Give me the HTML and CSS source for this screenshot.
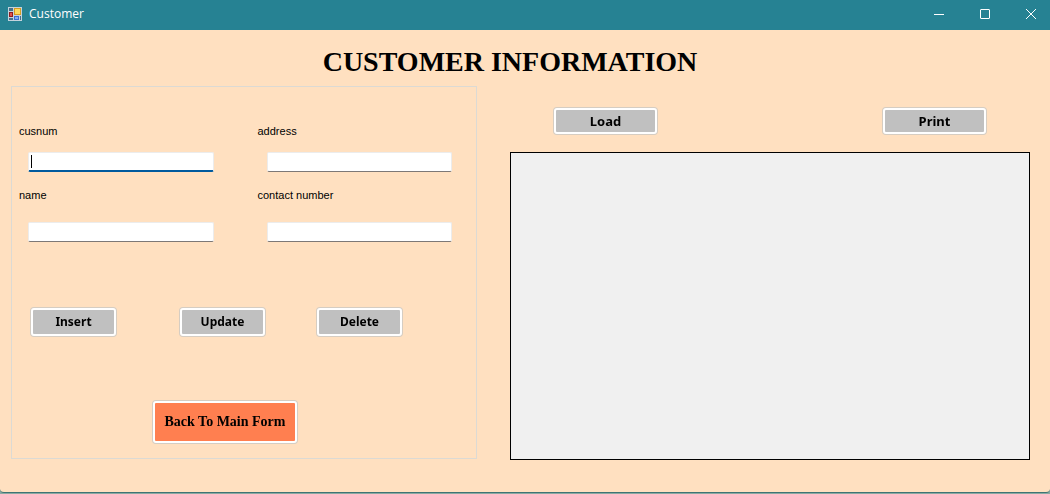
FILE: index.html
```html
<!DOCTYPE html>
<html lang="en">
<head>
<meta charset="utf-8">
<meta name="viewport" content="width=device-width, initial-scale=1">
<title>Customer</title>
<link rel="stylesheet" href="styles.css">
</head>
<body>
<div class="window">
  <header class="titlebar">
    <svg class="app-icon" viewBox="0 0 14 14" aria-hidden="true">
      <rect width="14" height="14" fill="#c3d3dc"/>
      <rect x="1" y="1" width="4" height="3" fill="#47708a"/>
      <rect x="6" y="1" width="7" height="7" fill="#d79a22"/>
      <rect x="7" y="2" width="5" height="5" fill="#fbd95c"/>
      <rect x="1" y="5" width="4" height="5" fill="#8f1d20"/>
      <rect x="2" y="6" width="2" height="3" fill="#e0524a"/>
      <rect x="1" y="11" width="4" height="2" fill="#47708a"/>
      <rect x="6" y="9" width="5" height="4" fill="#3b6fd0"/>
      <rect x="7" y="10" width="3" height="2" fill="#82aef2"/>
      <rect x="12" y="9" width="1" height="4" fill="#47708a"/>
    </svg>
    <span class="titlebar-text">Customer</span>
    <div class="window-controls">
      <button class="window-button" type="button" aria-label="Minimize">
        <svg class="control-icon" viewBox="0 0 10 10"><path d="M0 5.5H10"/></svg>
      </button>
      <button class="window-button" type="button" aria-label="Maximize">
        <svg class="control-icon" viewBox="0 0 10 10"><rect x=".5" y=".5" width="9" height="9" rx=".5"/></svg>
      </button>
      <button class="window-button" type="button" aria-label="Close">
        <svg class="control-icon" viewBox="0 0 10 10"><path d="M0 0L10 10M10 0L0 10"/></svg>
      </button>
    </div>
  </header>

  <h1 class="heading">CUSTOMER INFORMATION</h1>

  <main class="content">
    <form class="panel">
      <div class="fields">
        <div class="field">
          <label for="cusnum">cusnum</label>
          <input class="text-box" id="cusnum" type="text" autocomplete="off" autofocus>
        </div>
        <div class="field">
          <label for="address">address</label>
          <input class="text-box" id="address" type="text">
        </div>
        <div class="field field-low">
          <label for="name">name</label>
          <input class="text-box" id="name" type="text">
        </div>
        <div class="field field-low">
          <label for="contact">contact number</label>
          <input class="text-box" id="contact" type="text">
        </div>
      </div>
      <div class="actions">
        <button class="button" type="button">Insert</button>
        <button class="button" type="button">Update</button>
        <button class="button" type="button">Delete</button>
      </div>
      <button class="button button-back" type="button">Back To Main Form</button>
    </form>

    <section class="records" aria-label="Customer records">
      <div class="toolbar">
        <button class="button button-wide" type="button">Load</button>
        <button class="button button-wide" type="button">Print</button>
      </div>
      <div class="data-grid"></div>
    </section>
  </main>
</div>
</body>
</html>
```

FILE: styles.css
```css
* {
  box-sizing: border-box;
}

body {
  margin: 0;
  min-height: 100vh;
  display: flex;
  flex-direction: column;
  padding-bottom: 1px;
  background: #8aa9a2;
  color: #000;
  font-family: "Noto Sans", "Open Sans", sans-serif;
}

.window {
  flex: 1;
  display: flex;
  flex-direction: column;
  background: #ffe0c0;
  border-bottom: 1px solid #3f7474;
  border-radius: 0 0 4px 4px;
}

.titlebar {
  display: flex;
  align-items: center;
  height: 30px;
  padding: 0 0 2px 8px;
  background: #268293;
  color: #fff;
}

.app-icon {
  width: 14px;
  height: 14px;
  margin-right: 7px;
}

.titlebar-text {
  font: 12px/20px "Open Sans", sans-serif;
}

.window-controls {
  display: flex;
  gap: 8px;
  margin-left: auto;
}

.window-button {
  display: flex;
  align-items: center;
  justify-content: center;
  width: 38px;
  height: 28px;
  padding: 0;
  border: 0;
  background: transparent;
}

.control-icon {
  width: 10px;
  height: 10px;
  fill: none;
  stroke: #fff;
}

.heading {
  margin: 0;
  padding: 16px 30px 8px 0;
  font: bold 28px/32px "Liberation Serif", serif;
  text-align: center;
}

.content {
  flex: 1;
  display: grid;
  grid-template-columns: 466fr 520fr;
  gap: 33px;
  padding: 0 20px 32px 11px;
}

.panel {
  margin-bottom: 1px;
  padding: 36px 0 14px;
  border: 1px solid #dcdad4;
}

.fields {
  display: grid;
  grid-template-columns: 1fr 1fr;
  gap: 15px 20px;
  padding-left: 7px;
}

.field {
  display: flex;
  flex-direction: column;
  gap: 13px;
  font: 11px/16px "Liberation Sans", sans-serif;
}

.field-low {
  gap: 19px;
}

.text-box {
  height: 20px;
  margin: 0 24px 0 9px;
  padding: 0 3px;
  border: 1px solid #ececec;
  border-bottom-color: #7d7876;
  border-radius: 2px;
  background: #fff;
  font: inherit;
  outline: none;
}

.text-box:focus {
  border-bottom: 2px solid #005a9e;
  background: linear-gradient(#000, #000) 2px 2px / 1px 13px no-repeat #fff;
  caret-color: transparent;
}

.actions {
  display: grid;
  grid-template-columns: 149fr 137fr 159fr;
  margin-top: 66px;
  padding-left: 19px;
}

.button {
  width: 85px;
  height: 28px;
  padding: 0;
  border: 2px solid #fff;
  border-radius: 3px;
  background: #c0c0c0;
  box-shadow: 0 0 0 1px #d6cdc2;
  color: #000;
  font: bold 12px/16px "Noto Sans", "Open Sans", sans-serif;
}

.button-wide {
  width: 103px;
  height: 26px;
  font-size: 13px;
}

.button-back {
  display: block;
  width: 144px;
  height: 42px;
  margin: 65px 0 0 141px;
  background: #ff7f50;
  font: bold 14px/18px "Liberation Serif", serif;
}

.records {
  display: flex;
  flex-direction: column;
  gap: 18px;
  padding-top: 22px;
}

.toolbar {
  display: flex;
  justify-content: space-between;
  padding: 0 44px;
}

.data-grid {
  flex: 1;
  border: 1px solid #000;
  background: #f0f0f0;
}
```
